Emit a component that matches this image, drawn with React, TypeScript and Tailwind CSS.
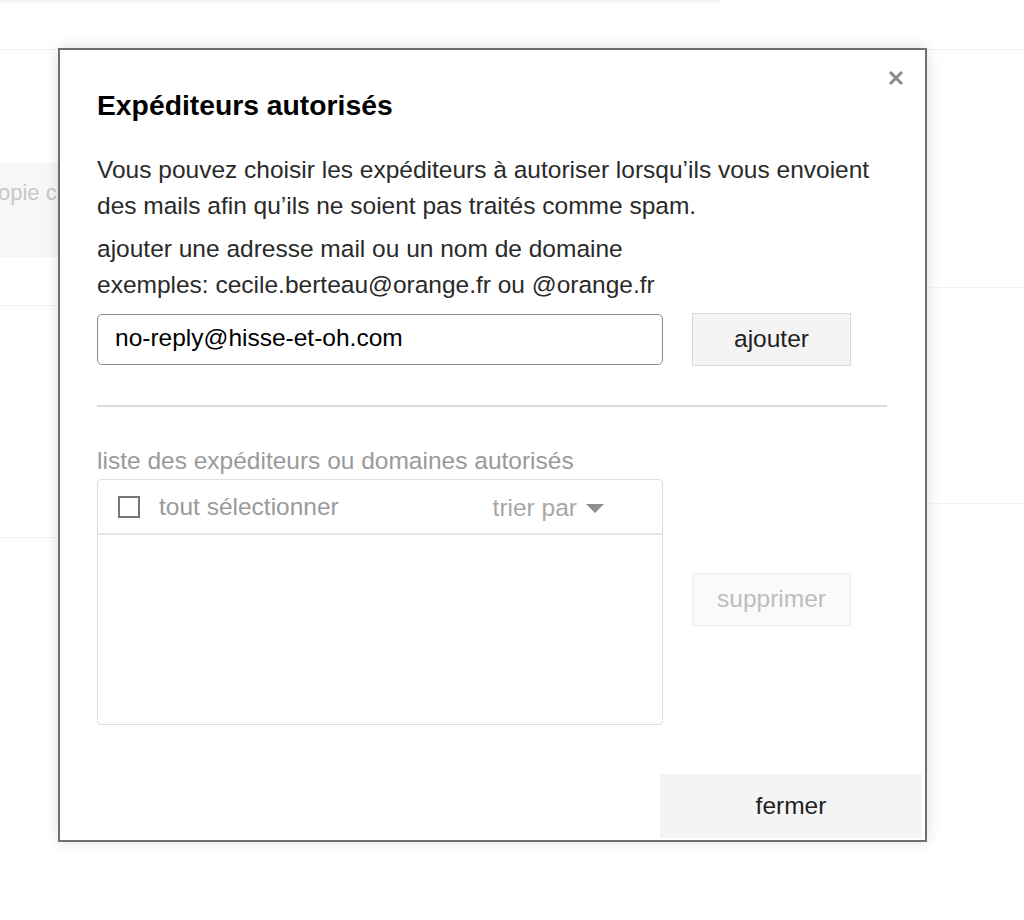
import React from "react";

export default function App() {
  const font = { fontFamily: '"Liberation Sans", Arial, Helvetica, sans-serif' };
  return (
    <div
      className="relative w-[1024px] h-[920px] bg-white overflow-hidden"
      style={font}
    >
      {/* background page */}
      <div className="h-[3px] w-[720px] bg-[#f4f4f4]" />
      <div className="h-[46px]" />
      <div className="h-px w-full bg-[#f1f1f1]" />
      <div className="flex">
        <div className="w-[58px] flex flex-col">
          <div className="mt-[113px] h-[94px] bg-[#f7f7f7] flex items-start pt-[16px] overflow-hidden">
            <span className="ml-[-13px] whitespace-nowrap text-[22px] leading-[28px] text-[#c8c8c8]">copie cachée</span>
          </div>
          <div className="mt-[48px] h-px bg-[#f1f1f1]" />
          <div className="mt-[231px] h-px bg-[#f1f1f1]" />
        </div>
        <div className="flex-1" />
        <div className="w-[94px] flex flex-col">
          <div className="mt-[237px] h-px bg-[#f3f3f3]" />
          <div className="mt-[215px] h-px bg-[#f3f3f3]" />
        </div>
      </div>

      {/* modal */}
      <div className="absolute left-[58px] top-[48px] w-[869px] h-[794px] bg-white border-2 border-[#6f6f6f] shadow-[0_0_14px_rgba(0,0,0,0.13)] flex flex-col">
        <button className="absolute right-[21px] top-[20px] w-[16px] h-[16px]">
          <svg width="16" height="16" viewBox="0 0 16 16">
            <path d="M2 2 L14 14 M14 2 L2 14" stroke="#8a8a8a" strokeWidth="3" />
          </svg>
        </button>

        <div className="px-[37px] pt-[39px] flex flex-col">
          <h1 className="text-[28.3px] leading-[32px] font-bold text-black">Expéditeurs autorisés</h1>
          <p className="mt-[31px] text-[24.5px] leading-[36px] text-[#2a2a2a]">
            Vous pouvez choisir les expéditeurs à autoriser lorsqu’ils vous envoient
            <br />
            des mails afin qu’ils ne soient pas traités comme spam.
          </p>
          <p className="mt-[7px] text-[24.5px] leading-[36px] text-[#2a2a2a]">
            ajouter une adresse mail ou un nom de domaine
            <br />
            exemples: cecile.berteau@orange.fr ou @orange.fr
          </p>
          <div className="mt-[10px] flex items-center">
            <div className="w-[566px] h-[51px] border border-[#8c8c8c] rounded-[5px] px-[17px] pb-[3px] flex items-center text-[24.5px] text-black">
              no-reply@hisse-et-oh.com
            </div>
            <button className="ml-[29px] w-[159px] h-[53px] bg-[#f4f4f4] border border-[#dadada] text-[24.5px] text-[#222]">
              ajouter
            </button>
          </div>
          <div className="mt-[39px] w-[790px] h-[2px] bg-[#dcdcdc]" />
          <div className="mt-[36px] text-[24.5px] leading-[36px] text-[#9a9a9a]">
            liste des expéditeurs ou domaines autorisés
          </div>
          <div className="flex">
            <div className="w-[566px] h-[246px] border border-[#dddddd] rounded-[4px] flex flex-col">
              <div className="h-[55px] border-b-2 border-[#e6e6e6] flex items-center pl-[20px] pr-[58px]">
                <div className="w-[22px] h-[22px] border-2 border-[#777]" />
                <span className="ml-[19px] mt-[2px] text-[24.5px] text-[#9a9a9a]">tout sélectionner</span>
                <div className="flex-1" />
                <span className="text-[24.5px] text-[#a8a8a8] mt-[4px]">trier par</span>
                <svg className="ml-[9px] mt-[4px]" width="18" height="9" viewBox="0 0 18 9">
                  <path d="M0 0 L18 0 L9 9 Z" fill="#8e8e8e" />
                </svg>
              </div>
            </div>
            <button className="ml-[29px] mt-[94px] w-[159px] h-[53px] bg-[#fafafa] border border-[#eeeeee] text-[24.5px] text-[#bdbdbd]">
              supprimer
            </button>
          </div>
        </div>

        <div className="mt-auto flex justify-end pr-[3px] pb-[2px]">
          <button className="w-[262px] h-[64px] bg-[#f4f4f4] text-[24.5px] text-[#222]">fermer</button>
        </div>
      </div>
    </div>
  );
}
